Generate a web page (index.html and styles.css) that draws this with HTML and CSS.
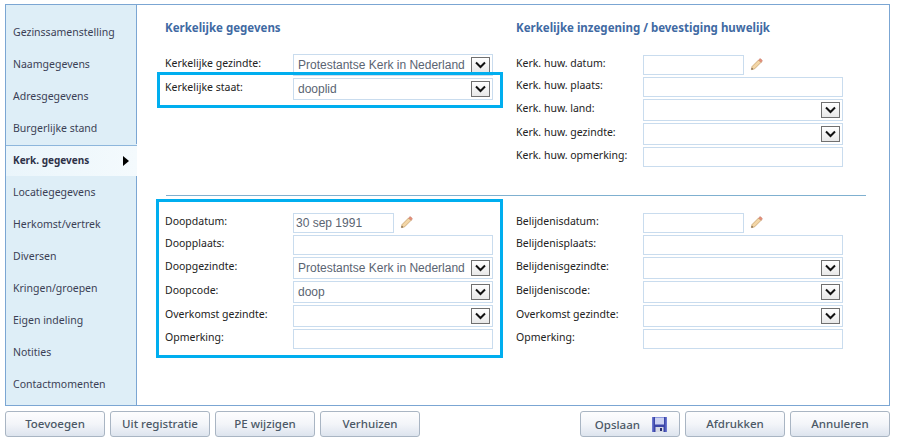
FILE: index.html
```html
<!DOCTYPE html>
<html lang="nl">
<head>
<meta charset="utf-8">
<title>Kerkelijke gegevens</title>
<link rel="stylesheet" href="styles.css">
</head>
<body>
<svg class="defs" width="0" height="0" aria-hidden="true">
  <symbol id="chev" viewBox="0 0 19 16"><path d="M5 5.500l4.500 4.500L14 5.500" fill="none" stroke="#111" stroke-width="2"/></symbol>
  <symbol id="pencil" viewBox="0 0 14 14">
    <path d="M1.500 12.500l.8-3.400 7-7 2.600 2.600-7 7z" fill="#f3d6a6" stroke="#c39a60" stroke-width=".8"/>
    <path d="M9.300 2.100l1-1c.5-.5 1-.4 1.400 0l1.200 1.200c.4.400.4.900 0 1.400l-1 1z" fill="#e8907a" stroke="#bd7a66" stroke-width=".6"/>
    <path d="M1.500 12.500l.5-2 1.500 1.500z" fill="#5a4a3a"/>
  </symbol>
</svg>
<div class="app">
  <div class="frame">
    <nav class="nav">
      <a class="nav-item">Gezinssamenstelling</a>
      <a class="nav-item">Naamgegevens</a>
      <a class="nav-item">Adresgegevens</a>
      <a class="nav-item">Burgerlijke stand</a>
      <a class="nav-item active">Kerk. gegevens<span class="nav-arrow"></span></a>
      <a class="nav-item">Locatiegegevens</a>
      <a class="nav-item">Herkomst/vertrek</a>
      <a class="nav-item">Diversen</a>
      <a class="nav-item">Kringen/groepen</a>
      <a class="nav-item">Eigen indeling</a>
      <a class="nav-item">Notities</a>
      <a class="nav-item">Contactmomenten</a>
    </nav>
    <main class="main">
      <section class="columns">
        <div class="col col-left">
          <h2 class="heading">Kerkelijke gegevens</h2>
          <div class="fields fields-left">
            <div class="row"><span class="label">Kerkelijke gezindte:</span><div class="select"><span class="select-text">Protestantse Kerk in Nederland</span><span class="select-btn"><svg width="19" height="16"><use href="#chev"/></svg></span></div></div>
            <div class="row marked marked-single"><span class="label">Kerkelijke staat:</span><div class="select"><span class="select-text">dooplid</span><span class="select-btn"><svg width="19" height="16"><use href="#chev"/></svg></span></div></div>
          </div>
        </div>
        <div class="col col-right">
          <h2 class="heading">Kerkelijke inzegening / bevestiging huwelijk</h2>
          <div class="fields fields-right">
            <div class="row"><span class="label">Kerk. huw. datum:</span><div class="input input-date"></div><svg class="pencil" width="13" height="13"><use href="#pencil"/></svg></div>
            <div class="row"><span class="label">Kerk. huw. plaats:</span><div class="input"></div></div>
            <div class="row"><span class="label">Kerk. huw. land:</span><div class="select"><span class="select-text"></span><span class="select-btn"><svg width="19" height="16"><use href="#chev"/></svg></span></div></div>
            <div class="row"><span class="label">Kerk. huw. gezindte:</span><div class="select"><span class="select-text"></span><span class="select-btn"><svg width="19" height="16"><use href="#chev"/></svg></span></div></div>
            <div class="row"><span class="label">Kerk. huw. opmerking:</span><div class="input"></div></div>
          </div>
        </div>
      </section>
      <hr class="divider">
      <section class="columns">
        <div class="col col-left">
          <div class="fields marked marked-group">
            <div class="row"><span class="label">Doopdatum:</span><div class="input input-date">30 sep 1991</div><svg class="pencil" width="13" height="13"><use href="#pencil"/></svg></div>
            <div class="row"><span class="label">Doopplaats:</span><div class="input"></div></div>
            <div class="row"><span class="label">Doopgezindte:</span><div class="select"><span class="select-text">Protestantse Kerk in Nederland</span><span class="select-btn"><svg width="19" height="16"><use href="#chev"/></svg></span></div></div>
            <div class="row"><span class="label">Doopcode:</span><div class="select"><span class="select-text">doop</span><span class="select-btn"><svg width="19" height="16"><use href="#chev"/></svg></span></div></div>
            <div class="row"><span class="label">Overkomst gezindte:</span><div class="select"><span class="select-text"></span><span class="select-btn"><svg width="19" height="16"><use href="#chev"/></svg></span></div></div>
            <div class="row"><span class="label">Opmerking:</span><div class="input"></div></div>
          </div>
        </div>
        <div class="col col-right">
          <div class="fields">
            <div class="row"><span class="label">Belijdenisdatum:</span><div class="input input-date"></div><svg class="pencil" width="13" height="13"><use href="#pencil"/></svg></div>
            <div class="row"><span class="label">Belijdenisplaats:</span><div class="input"></div></div>
            <div class="row"><span class="label">Belijdenisgezindte:</span><div class="select"><span class="select-text"></span><span class="select-btn"><svg width="19" height="16"><use href="#chev"/></svg></span></div></div>
            <div class="row"><span class="label">Belijdeniscode:</span><div class="select"><span class="select-text"></span><span class="select-btn"><svg width="19" height="16"><use href="#chev"/></svg></span></div></div>
            <div class="row"><span class="label">Overkomst gezindte:</span><div class="select"><span class="select-text"></span><span class="select-btn"><svg width="19" height="16"><use href="#chev"/></svg></span></div></div>
            <div class="row"><span class="label">Opmerking:</span><div class="input"></div></div>
          </div>
        </div>
      </section>
    </main>
  </div>
  <footer class="footer">
    <div class="btn-group">
      <button class="btn">Toevoegen</button>
      <button class="btn">Uit registratie</button>
      <button class="btn">PE wijzigen</button>
      <button class="btn">Verhuizen</button>
    </div>
    <div class="btn-group">
      <button class="btn btn-save">Opslaan
        <svg class="floppy" width="15" height="15" viewBox="0 0 15 15"><path d="M0 0h15v15H0z" fill="#3c46a8"/><path d="M3 0h9v7.500H3z" fill="#ccd2f2"/><path d="M3 0h9v1H3z" fill="#8d98de"/><path d="M3.500 10h8v5h-8z" fill="#d6d9e4"/><path d="M8 11h2v3H8z" fill="#2a2f70"/><path d="M0 0h1.500v15H0zM13.500 0H15v15h-1.500z" fill="#6b76cf"/></svg>
      </button>
      <button class="btn">Afdrukken</button>
      <button class="btn">Annuleren</button>
    </div>
  </footer>
</div>
</body>
</html>
```
FILE: styles.css
```css
* { box-sizing: border-box; }
html, body { margin: 0; padding: 0; background: #fff; overflow: hidden; }
body { font-family: "Noto Sans", "Liberation Sans", sans-serif; font-size: 10.5px; color: #222; }
.defs { position: absolute; }
.app { width: 898px; height: 443px; padding: 4px 8px 0 5px; }
.frame { display: flex; width: 885px; height: 402px; border: 1px solid #7ba6d3; }
.nav { width: 131px; flex: none; padding-top: 11px; background: #deeef7; border-right: 1px solid #7ba6d3; }
.nav-item { display: flex; align-items: center; justify-content: space-between; height: 32px; padding: 0 9px 0 7px; color: #3b3f55; }
.nav-item.active { margin-right: -1px; padding: 0 8px 2px 7px; font-size: 10px; font-weight: 700; color: #2e3248; background: linear-gradient(90deg, #eaf5fb, #f4fafd); border-top: 1px solid #deeef7; box-shadow: inset 0 1px 0 #8db6dc; position: relative; }
.nav-arrow { width: 0; height: 0; margin-top: 2px; border-left: 6px solid #000; border-top: 5px solid transparent; border-bottom: 5px solid transparent; }
.main { flex: 1; padding: 14px 0 0 28px; }
.columns { display: flex; }
.col-left { width: 351px; flex: none; }
.col-right { flex: 1; }
.heading { margin: 0; height: 18px; font-size: 11.5px; line-height: 18px; font-weight: 700; color: #3f6aa3; }
.fields { display: flex; flex-direction: column; gap: 2px; }
.fields-left { margin-top: 17px; width: 328px; }
.fields-right { margin-top: 18px; }
.row { display: flex; align-items: flex-start; }
.col-right .row .label { width: 127px; }
.label { width: 128px; flex: none; line-height: 17px; white-space: nowrap; color: #222; }
.row:has(.select) .label { line-height: 19px; }
.input, .select { width: 200px; flex: none; background: #fff; border: 1px solid #c9dcee; font-family: "Liberation Sans", sans-serif; font-size: 12px; color: #5a6472; }
.input { height: 20px; line-height: 18px; padding-left: 2px; }
.input-date { width: 101px; }
.select { height: 22px; display: flex; align-items: center; justify-content: space-between; padding: 0 2px 0 4px; }
.select-text { white-space: nowrap; }
.select-btn { display: block; width: 19px; height: 16px; flex: none; border: 1px solid #707070; background: linear-gradient(#fff, #e8e8e8); }
.select-btn svg { display: block; margin: -1px; }
.pencil { margin: 3px 0 0 6px; flex: none; }
.divider { width: 700px; height: 1px; margin: 28px 0 17px 1px; border: 0; background: #7fb0d0; }
.marked { position: relative; }
.marked::after { content: ""; position: absolute; border: 3px solid #00aeef; pointer-events: none; }
.marked-single::after { inset: -6px -10px -8px -8px; }
.marked-group { width: 328px; }
.marked-group::after { inset: -14px -10px -9px -9px; }
.footer { display: flex; justify-content: space-between; margin-top: 5px; }
.btn-group { display: flex; gap: 5px; }
.btn { width: 100px; height: 26px; padding: 0 0 2px; border: 1px solid #a9b5c3; border-radius: 3px; font-family: "Noto Sans", "Liberation Sans", sans-serif; font-size: 11.5px; font-weight: 500; color: #4b5866; background: linear-gradient(#fdfdfe, #f3f5f9 50%, #dde4ee); }
.btn-save { display: flex; align-items: center; justify-content: flex-end; gap: 12px; padding: 0 12px 0 0; }
.floppy { flex: none; }
```
